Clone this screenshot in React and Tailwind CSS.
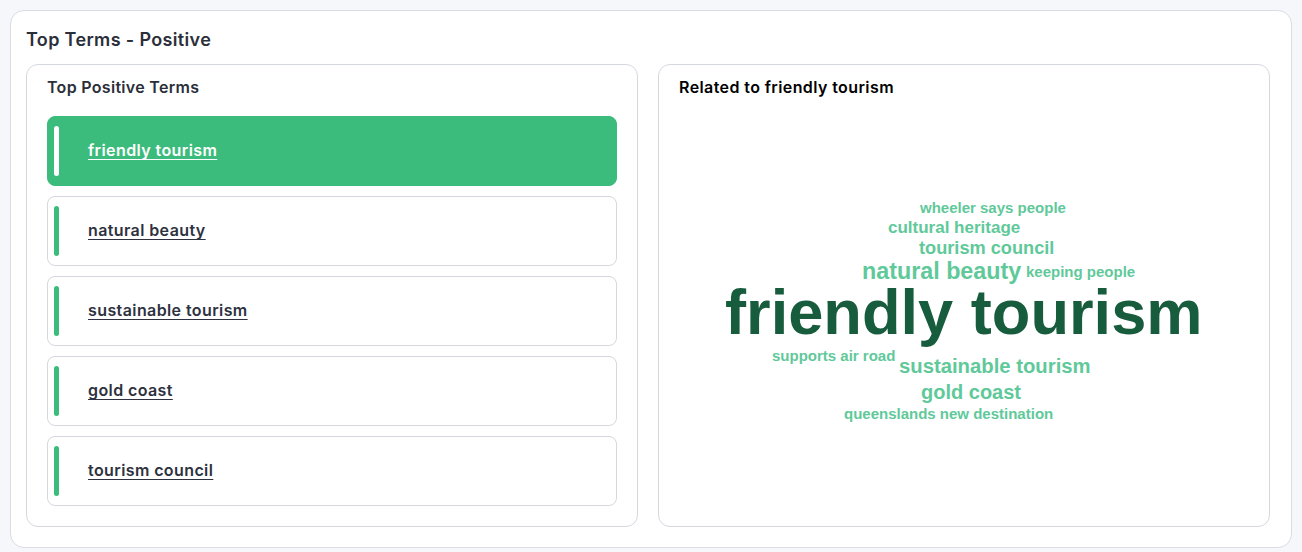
import React from 'react'

const terms = ['friendly tourism', 'natural beauty', 'sustainable tourism', 'gold coast', 'tourism council']

const cloud = [
  { text: 'wheeler says people', x: 261, y: 135, size: 'text-[15px] leading-none', dark: false },
  { text: 'cultural heritage', x: 229, y: 154, size: 'text-[17px] leading-none', dark: false },
  { text: 'tourism council', x: 260, y: 174, size: 'text-[18.2px] leading-none', dark: false },
  { text: 'natural beauty', x: 203, y: 195, size: 'text-[23.3px] leading-none', dark: false },
  { text: 'keeping people', x: 367, y: 199, size: 'text-[15px] leading-none', dark: false },
  { text: 'friendly tourism', x: 66, y: 221, size: 'text-[63.2px] leading-[0.85]', dark: true },
  { text: 'supports air road', x: 113, y: 283, size: 'text-[15px] leading-none', dark: false },
  { text: 'sustainable tourism', x: 240, y: 291, size: 'text-[20.3px] leading-none', dark: false },
  { text: 'gold coast', x: 262, y: 317, size: 'text-[20px] leading-none', dark: false },
  { text: 'queenslands new destination', x: 185, y: 341, size: 'text-[15px] leading-none', dark: false },
]

const TermRow = ({ label, active }) => (
  <div
    className={`flex h-[70px] items-center rounded-lg border pl-[6px] ${
      active ? 'border-[#3bbc7c] bg-[#3bbc7c]' : 'border-[#d5d8de] bg-white'
    }`}
  >
    <div className={`h-[50px] w-[5px] rounded-full ${active ? 'bg-white' : 'bg-[#3bbc7c]'}`}></div>
    <span
      className={`mb-[2px] ml-[29px] text-[16px] font-semibold tracking-[0.4px] underline underline-offset-[3px] ${
        active ? 'text-white' : 'text-[#2e3240]'
      }`}
    >
      {label}
    </span>
  </div>
)

export default function App() {
  return (
    <div className="h-[552px] w-[1302px] bg-[#f6f7fb] pl-[10px] pt-[10px] font-['Inter',sans-serif]">
      <div className="h-[538px] w-[1282px] rounded-[14px] border border-[#d9dce3] bg-white px-[15px] pt-[17px]">
        <h2 className="text-[18px] font-semibold leading-[24px] tracking-[0.35px] text-[#2b2f3a]">Top Terms - Positive</h2>

        <div className="mt-[12px] flex gap-[20px]">
          <div className="h-[463px] w-[612px] rounded-[12px] border border-[#d5d8de] px-[20px] pt-[13px]">
            <h3 className="text-[16px] font-semibold leading-[18px] tracking-[0.3px] text-[#2b2f3a]">Top Positive Terms</h3>
            <div className="mt-[20px] flex flex-col gap-[10px]">
              {terms.map((t, i) => (
                <TermRow key={t} label={t} active={i === 0} />
              ))}
            </div>
          </div>

          <div className="relative h-[463px] w-[612px] rounded-[12px] border border-[#d5d8de] px-[20px] pt-[13px]">
            <h3 className="text-[16px] font-semibold leading-[18px] tracking-[0.4px] text-black">Related to friendly tourism</h3>
            {cloud.map((w) => (
              <span
                key={w.text}
                className={`absolute whitespace-nowrap font-['Liberation_Sans',Arial,sans-serif] font-bold ${w.size} ${
                  w.dark ? 'text-[#185c3e]' : 'text-[#5fc99a]'
                }`}
                style={{ left: w.x, top: w.y }}
              >
                {w.text}
              </span>
            ))}
          </div>
        </div>
      </div>
    </div>
  )
}
